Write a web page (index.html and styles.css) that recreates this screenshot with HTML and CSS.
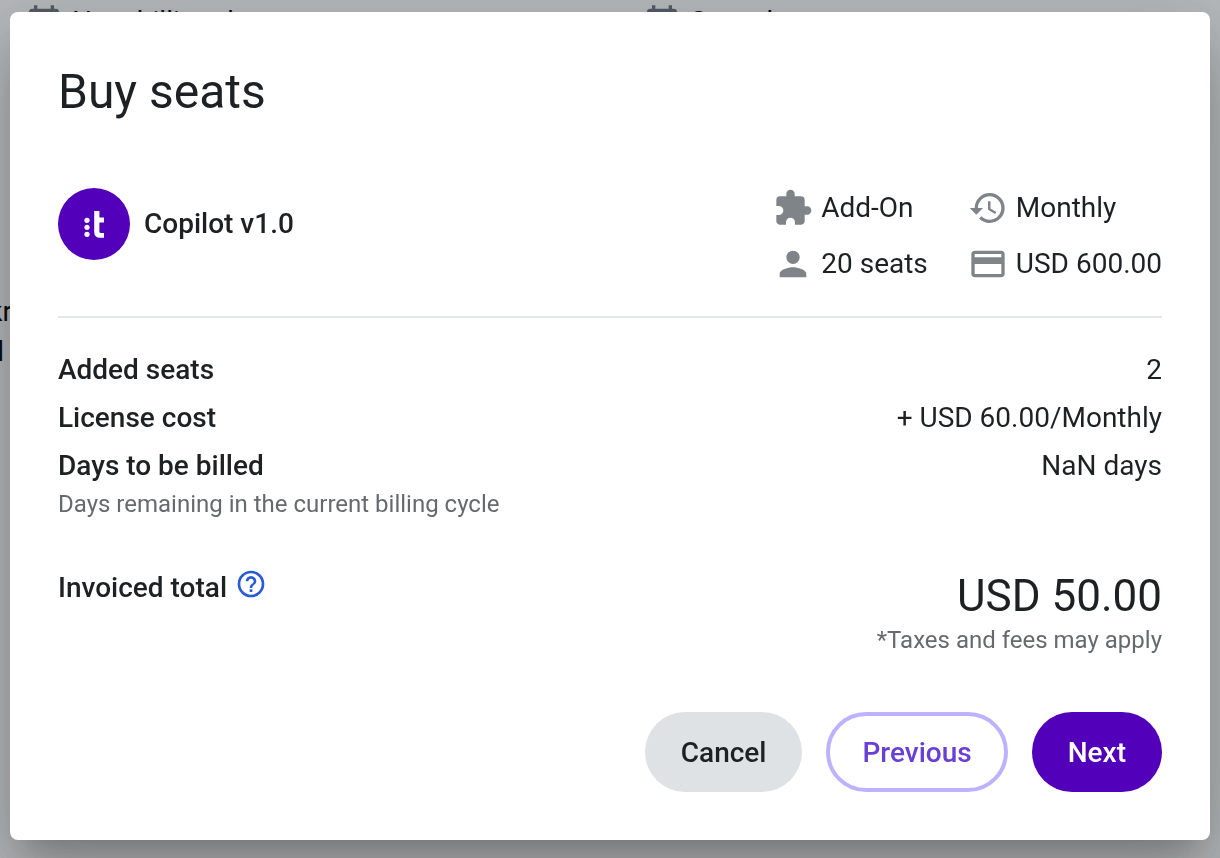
FILE: index.html
```html
<!DOCTYPE html>
<html lang="en">
<head>
    <meta charset="utf-8">
    <meta name="viewport" content="width=device-width, initial-scale=1">
    <title>Buy seats</title>
    <link rel="stylesheet" href="styles.css">
</head>
<body>
    <main class="page" aria-hidden="true">
        <div class="page-dates">
            <div class="page-date">
                <svg class="icon page-icon" viewBox="0 0 24 24"><path d="M19 4h-1V2h-2v2H8V2H6v2H5a2 2 0 0 0-2 2v14a2 2 0 0 0 2 2h14a2 2 0 0 0 2-2V6a2 2 0 0 0-2-2zm0 16H5V9h14z"/></svg>
                <span>Next billing date</span>
            </div>
            <div class="page-date">
                <svg class="icon page-icon" viewBox="0 0 24 24"><path d="M19 4h-1V2h-2v2H8V2H6v2H5a2 2 0 0 0-2 2v14a2 2 0 0 0 2 2h14a2 2 0 0 0 2-2V6a2 2 0 0 0-2-2zm0 16H5V9h14z"/></svg>
                <span>Start date</span>
            </div>
        </div>
        <div class="page-side">
            <span>kr</span>
            <b>l</b>
        </div>
    </main>

    <div class="backdrop">
        <div class="dialog" role="dialog" aria-modal="true" aria-labelledby="dialog-title">
            <h1 id="dialog-title" class="dialog-title">Buy seats</h1>

            <!-- Plan summary -->
            <section class="plan">
                <div class="plan-name">
                    <svg class="plan-logo" viewBox="0 0 72 72" aria-hidden="true">
                        <circle cx="36" cy="36" r="36" fill="#5300ba"/>
                        <g fill="#fff">
                            <circle cx="29" cy="32.300" r="2.600"/>
                            <circle cx="29" cy="39.300" r="2.600"/>
                            <circle cx="29" cy="46.300" r="2.600"/>
                            <path d="M36.200 23h5.200v6.500h4.600v5h-4.600v9q0 1.500 1.500 1.500h3.100v4.800h-4q-5.800 0-5.800-5.800z"/>
                        </g>
                    </svg>
                    <h2>Copilot v1.0</h2>
                </div>
                <div class="facts">
                    <div class="fact">
                        <svg class="icon" viewBox="0 0 24 24" aria-hidden="true"><path d="M20.500 11H19V7c0-1.100-.9-2-2-2h-4V3.500a2.500 2.500 0 0 0-5 0V5H4c-1.100 0-1.990.9-1.990 2v3.800H3.500c1.490 0 2.700 1.210 2.700 2.700s-1.210 2.700-2.700 2.700H2V20c0 1.100.9 2 2 2h3.800v-1.500c0-1.490 1.210-2.700 2.700-2.700s2.700 1.210 2.700 2.700V22H17c1.100 0 2-.9 2-2v-4h1.500a2.500 2.500 0 0 0 0-5z"/></svg>
                        <span>Add-On</span>
                    </div>
                    <div class="fact">
                        <svg class="icon" viewBox="0 0 24 24" aria-hidden="true"><path d="M13 3a9 9 0 0 0-9 9H1l3.890 3.890.07.14L9 12H6c0-3.870 3.130-7 7-7s7 3.130 7 7-3.130 7-7 7c-1.930 0-3.680-.79-4.940-2.060l-1.420 1.420A8.954 8.954 0 0 0 13 21a9 9 0 0 0 0-18zm-1 5v5l4.280 2.540.72-1.210-3.500-2.080V8z"/></svg>
                        <span>Monthly</span>
                    </div>
                    <div class="fact">
                        <svg class="icon" viewBox="0 0 24 24" aria-hidden="true"><path d="M12 12a4 4 0 1 0 0-8 4 4 0 0 0 0 8zm0 2c-2.670 0-8 1.340-8 4v2h16v-2c0-2.660-5.330-4-8-4z"/></svg>
                        <span>20 seats</span>
                    </div>
                    <div class="fact">
                        <svg class="icon" viewBox="0 0 24 24" aria-hidden="true"><path d="M20 4H4c-1.110 0-1.990.89-1.990 2L2 18c0 1.110.89 2 2 2h16c1.110 0 2-.89 2-2V6c0-1.110-.89-2-2-2zm0 14H4v-6h16zm0-10H4V6h16z"/></svg>
                        <span>USD 600.00</span>
                    </div>
                </div>
            </section>

            <!-- Cost breakdown -->
            <dl class="costs">
                <div class="cost-row">
                    <dt>Added seats</dt>
                    <dd>2</dd>
                </div>
                <div class="cost-row">
                    <dt>License cost</dt>
                    <dd>+ USD 60.00/Monthly</dd>
                </div>
                <div class="cost-row">
                    <dt>Days to be billed</dt>
                    <dd>NaN days</dd>
                </div>
            </dl>
            <p class="hint">Days remaining in the current billing cycle</p>

            <section class="total">
                <div class="total-label">
                    <h2>Invoiced total</h2>
                    <button type="button" class="help" aria-label="About the invoiced total">
                        <svg viewBox="0 0 24 24" aria-hidden="true"><path d="M11 18h2v-2h-2zm1-16a10 10 0 1 0 0 20 10 10 0 0 0 0-20zm0 18c-4.410 0-8-3.590-8-8s3.590-8 8-8 8 3.590 8 8-3.590 8-8 8zm0-14a4 4 0 0 0-4 4h2c0-1.100.9-2 2-2s2 .9 2 2c0 2-3 1.750-3 5h2c0-2.250 3-2.500 3-5a4 4 0 0 0-4-4z"/></svg>
                    </button>
                </div>
                <div class="total-value">
                    <p class="amount">USD 50.00</p>
                    <p class="taxes">*Taxes and fees may apply</p>
                </div>
            </section>

            <div class="actions">
                <button type="button" class="btn btn-cancel">Cancel</button>
                <button type="button" class="btn btn-previous">Previous</button>
                <button type="button" class="btn btn-next">Next</button>
            </div>
        </div>
    </div>
</body>
</html>
```
FILE: styles.css
```css
* {
    box-sizing: border-box;
}
body {
    margin: 0;
    font-family: Roboto, sans-serif;
    font-size: 28px;
    line-height: 40px;
    color: #1d2124;
    background-color: #fff;
}
h1, h2, p, dl, dd {
    margin: 0;
}
h2, dt {
    font-size: 28px;
    font-weight: 500;
}
.icon {
    width: 40px;
    height: 40px;
    flex-shrink: 0;
    fill: #7e8488;
}

/* Page behind the dialog */
.page {
    height: 100vh;
    overflow: hidden;
    color: #000;
}
.page-dates {
    display: grid;
    grid-template-columns: 1fr 1fr;
    gap: 40px;
    padding: 2px 0 0 24px;
}
.page-date {
    display: flex;
    gap: 8px;
}
.page-icon {
    fill: #6e7480;
}
.page-side {
    display: flex;
    flex-direction: column;
    align-items: flex-end;
    width: 12px;
    margin-top: 250px;
}
.page-side b {
    padding-right: 8px;
    font-weight: 500;
}

/* Dialog */
.backdrop {
    position: fixed;
    inset: 0;
    padding: 12px 10px;
    overflow: hidden;
    background-color: rgba(36, 46, 52, 0.33);
}
.dialog {
    padding: 48px;
    border-radius: 8px;
    background-color: #fff;
    box-shadow: 0 22px 30px -14px rgba(0, 0, 0, 0.2),
        0 48px 76px 6px rgba(0, 0, 0, 0.14),
        0 18px 92px 16px rgba(0, 0, 0, 0.12);
}
.dialog-title {
    font-size: 48px;
    font-weight: 400;
    line-height: 64px;
}
.plan {
    display: flex;
    justify-content: space-between;
    margin-top: 64px;
    padding-bottom: 32px;
    border-bottom: 2px solid #e4e7ea;
}
.plan-name {
    display: flex;
    align-items: center;
    align-self: flex-start;
    gap: 14px;
}
.plan-logo {
    width: 72px;
    height: 72px;
}
.facts {
    display: grid;
    grid-template-columns: auto auto;
    gap: 16px 40px;
}
.fact {
    display: flex;
    gap: 8px;
}
.costs {
    margin-top: 28px;
    line-height: 48px;
}
.cost-row {
    display: flex;
    justify-content: space-between;
}
.hint,
.taxes {
    font-size: 24px;
    line-height: 28px;
    color: #656a6e;
}
.total {
    display: flex;
    justify-content: space-between;
    margin-top: 50px;
}
.total-label {
    display: flex;
    align-items: flex-start;
    gap: 8px;
}
.help {
    width: 32px;
    height: 32px;
    padding: 0;
    border: none;
    background: none;
    cursor: pointer;
}
.help svg {
    display: block;
    fill: #2a5bd7;
}
.total-value {
    text-align: right;
}
.amount {
    font-size: 44px;
    line-height: 56px;
}
.taxes {
    line-height: 32px;
}
.actions {
    display: flex;
    justify-content: flex-end;
    gap: 24px;
    margin-top: 56px;
}
.btn {
    height: 80px;
    padding: 0 36px;
    border: none;
    border-radius: 40px;
    font-family: inherit;
    font-size: 28px;
    font-weight: 500;
    cursor: pointer;
}
.btn-cancel {
    color: #1d2124;
    background-color: #dee2e5;
}
.btn-previous {
    padding: 0 32px;
    border: 4px solid #beb2ff;
    color: #6a3fd4;
    background-color: #fff;
}
.btn-next {
    color: #fff;
    background-color: #5300ba;
}
```
